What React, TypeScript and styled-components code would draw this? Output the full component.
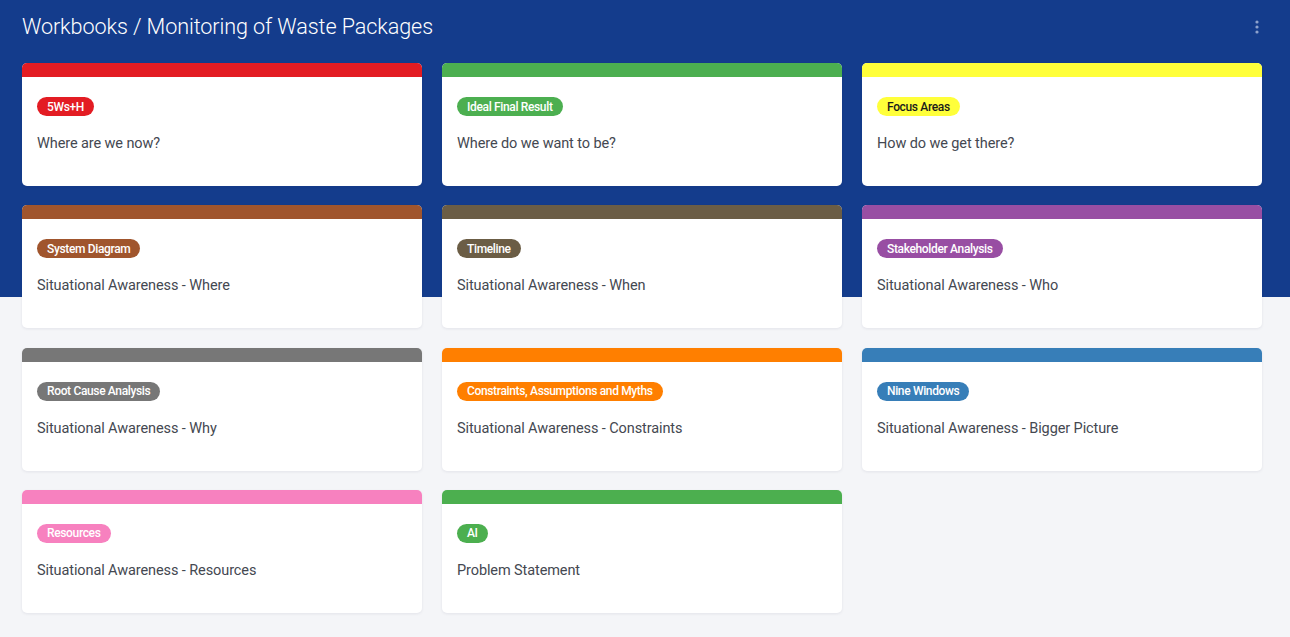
import React from "react";
import styled, { createGlobalStyle } from "styled-components";

const GlobalStyle = createGlobalStyle`
  html, body { margin: 0; padding: 0; }
  body {
    font-family: Roboto, "Liberation Sans", Arial, sans-serif;
    background: #f4f5f8;
  }
  * { box-sizing: border-box; }
`;

const Page = styled.div`
  min-height: 637px;
  background: linear-gradient(to bottom, #143c8c 0, #143c8c 297px, #f4f5f8 297px, #f4f5f8 100%);
  padding: 0 28px 24px 22px;
`;

const TopBar = styled.header`
  display: flex;
  align-items: center;
  justify-content: space-between;
  height: 63px;
  padding-bottom: 10px;
`;

const Title = styled.h1`
  margin: 0;
  font-family: Roboto, "Liberation Sans", sans-serif;
  font-weight: 300;
  font-size: 21.6px;
  letter-spacing: -0.1px;
  color: #ffffff;
`;

const MenuButton = styled.button`
  border: 0;
  background: transparent;
  padding: 0;
  width: 10px;
  height: 16px;
  display: flex;
  align-items: center;
  justify-content: center;
  cursor: pointer;
`;

const Grid = styled.div`
  display: grid;
  grid-template-columns: repeat(3, 400px);
  column-gap: 20px;
  row-gap: 19.3px;
`;

const Card = styled.div`
  background: #ffffff;
  border-radius: 5px;
  overflow: hidden;
  height: 123px;
  box-shadow: 0 1px 3px rgba(20, 30, 60, 0.08);
  display: flex;
  flex-direction: column;
`;

const CardBar = styled.div<{ $color: string }>`
  height: 14px;
  background: ${(p) => p.$color};
  flex-shrink: 0;
`;

const CardBody = styled.div`
  padding: 20px 15px 0 15px;
  display: flex;
  flex-direction: column;
  align-items: flex-start;
  gap: 19px;
`;

const Badge = styled.span<{ $color: string; $text: string }>`
  display: inline-flex;
  align-items: center;
  height: 19px;
  padding: 0 10px;
  border-radius: 10px;
  background: ${(p) => p.$color};
  color: ${(p) => p.$text};
  font-family: Roboto, "Liberation Sans", sans-serif;
  font-size: 12px;
  font-weight: 500;
  letter-spacing: -0.35px;
  white-space: nowrap;
`;

const CardText = styled.div`
  font-family: Roboto, "Liberation Sans", sans-serif;
  font-size: 14.5px;
  color: #444851;
  letter-spacing: -0.1px;
`;

type Item = { badge: string; text: string; color: string; textColor?: string };

const items: Item[] = [
  { badge: "5Ws+H", text: "Where are we now?", color: "#e31c23" },
  { badge: "Ideal Final Result", text: "Where do we want to be?", color: "#4caf50" },
  { badge: "Focus Areas", text: "How do we get there?", color: "#ffff3a", textColor: "#1a1a1a" },
  { badge: "System Diagram", text: "Situational Awareness - Where", color: "#a0552d" },
  { badge: "Timeline", text: "Situational Awareness - When", color: "#6b5d45" },
  { badge: "Stakeholder Analysis", text: "Situational Awareness - Who", color: "#984ea3" },
  { badge: "Root Cause Analysis", text: "Situational Awareness - Why", color: "#777777" },
  { badge: "Constraints, Assumptions and Myths", text: "Situational Awareness - Constraints", color: "#ff7f00" },
  { badge: "Nine Windows", text: "Situational Awareness - Bigger Picture", color: "#377eb8" },
  { badge: "Resources", text: "Situational Awareness - Resources", color: "#f781bf" },
  { badge: "AI", text: "Problem Statement", color: "#4caf4f" },
];

const KebabIcon = () => (
  <svg width="4" height="14" viewBox="0 0 4 14">
    <circle cx="2" cy="2" r="1.6" fill="#8ea2cc" />
    <circle cx="2" cy="7" r="1.6" fill="#8ea2cc" />
    <circle cx="2" cy="12" r="1.6" fill="#8ea2cc" />
  </svg>
);

export default function App() {
  return (
    <>
      <GlobalStyle />
      <Page>
        <TopBar>
          <Title>Workbooks / Monitoring of Waste Packages</Title>
          <MenuButton aria-label="menu">
            <KebabIcon />
          </MenuButton>
        </TopBar>
        <Grid>
          {items.map((it) => (
            <Card key={it.badge}>
              <CardBar $color={it.color} />
              <CardBody>
                <Badge $color={it.color} $text={it.textColor ?? "#ffffff"}>
                  {it.badge}
                </Badge>
                <CardText>{it.text}</CardText>
              </CardBody>
            </Card>
          ))}
        </Grid>
      </Page>
    </>
  );
}
